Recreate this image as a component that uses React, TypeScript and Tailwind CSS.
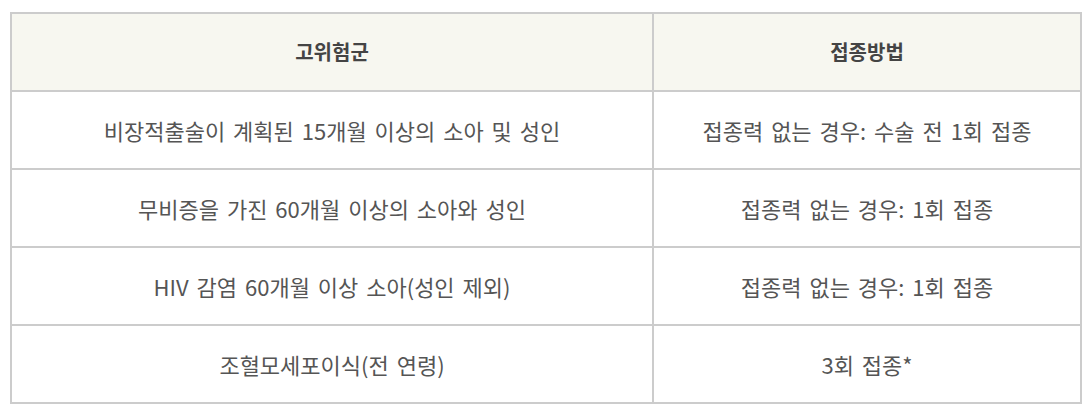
const rows: [string, string][] = [
  ['비장적출술이 계획된 15개월 이상의 소아 및 성인', '접종력 없는 경우: 수술 전 1회 접종'],
  ['무비증을 가진 60개월 이상의 소아와 성인', '접종력 없는 경우: 1회 접종'],
  ['HIV 감염 60개월 이상 소아(성인 제외)', '접종력 없는 경우: 1회 접종'],
  ['조혈모세포이식(전 연령)', '3회 접종*'],
];

export default function App() {
  return (
    <div className="bg-white w-[1090px] h-[414px] pt-[12px] pl-[10px] font-['Noto_Sans_CJK_KR','Noto_Sans',sans-serif]">
      <table className="w-[1072px] border-collapse text-[22px] text-[#555] [word-spacing:3px]">
        <thead>
          <tr className="bg-[#f7f7f0]">
            <th className="w-[642px] h-[78px] border-2 border-[#cccccc] text-[20px] font-bold text-[#444] text-center">고위험군</th>
            <th className="h-[78px] border-2 border-[#cccccc] text-[20px] font-bold text-[#444] text-center">접종방법</th>
          </tr>
        </thead>
        <tbody>
          {rows.map(([group, method]) => (
            <tr key={group}>
              <td className="h-[78px] border-2 border-[#cccccc] text-center">{group}</td>
              <td className="h-[78px] border-2 border-[#cccccc] text-center">{method}</td>
            </tr>
          ))}
        </tbody>
      </table>
    </div>
  );
}
